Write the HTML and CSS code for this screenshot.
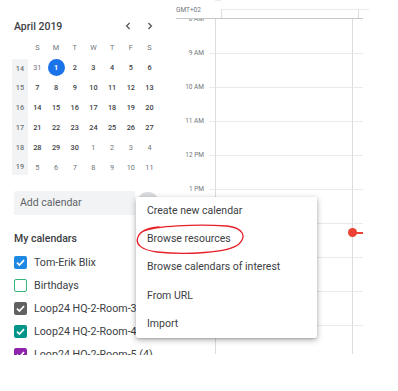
FILE: index.html
```html
<!DOCTYPE html>
<html>
<head>
<meta charset="utf-8">
<title>Calendar</title>
<link rel="stylesheet" href="styles.css">
</head>
<body>
<div class="app">
	<aside class="side">
		<div class="mini-head">
			<span class="month">April 2019</span>
			<span class="nav">
				<svg viewBox="0 0 6 8" width="6" height="8"><path d="M4.6 1 L1.6 4 L4.6 7"/></svg>
				<svg viewBox="0 0 6 8" width="6" height="8"><path d="M1.4 1 L4.4 4 L1.4 7"/></svg>
			</span>
		</div>
		<div class="mini-grid">
			<span></span><span class="dow">S</span><span class="dow">M</span><span class="dow">T</span><span class="dow">W</span><span class="dow">T</span><span class="dow">F</span><span class="dow">S</span>
			<span class="wk first">14</span><span class="day dim">31</span><span class="day"><b class="today">1</b></span><span class="day">2</span><span class="day">3</span><span class="day">4</span><span class="day">5</span><span class="day">6</span>
			<span class="wk">15</span><span class="day">7</span><span class="day">8</span><span class="day">9</span><span class="day">10</span><span class="day">11</span><span class="day">12</span><span class="day">13</span>
			<span class="wk">16</span><span class="day">14</span><span class="day">15</span><span class="day">16</span><span class="day">17</span><span class="day">18</span><span class="day">19</span><span class="day">20</span>
			<span class="wk">17</span><span class="day">21</span><span class="day">22</span><span class="day">23</span><span class="day">24</span><span class="day">25</span><span class="day">26</span><span class="day">27</span>
			<span class="wk">18</span><span class="day">28</span><span class="day">29</span><span class="day">30</span><span class="day dim">1</span><span class="day dim">2</span><span class="day dim">3</span><span class="day dim">4</span>
			<span class="wk last">19</span><span class="day dim">5</span><span class="day dim">6</span><span class="day dim">7</span><span class="day dim">8</span><span class="day dim">9</span><span class="day dim">10</span><span class="day dim">11</span>
		</div>

		<div class="add-row">
			<div class="add-field">Add calendar</div>
			<div class="add-btn"></div>
		</div>

		<h3 class="section">My calendars</h3>
		<ul class="cal-list">
			<li><span class="cb blue"><svg viewBox="0 0 14 14"><path d="M3.2 7.2l2.6 2.5 5-5.2"/></svg></span>Tom-Erik Blix</li>
			<li><span class="cb green"></span>Birthdays</li>
			<li><span class="cb grey"><svg viewBox="0 0 14 14"><path d="M3.2 7.2l2.6 2.5 5-5.2"/></svg></span>Loop24 HQ-2-Room-3 (4)</li>
			<li><span class="cb teal"><svg viewBox="0 0 14 14"><path d="M3.2 7.2l2.6 2.5 5-5.2"/></svg></span>Loop24 HQ-2-Room-4 (4)</li>
			<li><span class="cb purple"><svg viewBox="0 0 14 14"><path d="M3.2 7.2l2.6 2.5 5-5.2"/></svg></span>Loop24 HQ-2-Room-5 (4)</li>
		</ul>
	</aside>

	<main class="week">
		<div class="head-row">
			<div class="tz">GMT+02</div>
			<div class="gut"></div>
			<div class="col"></div>
			<div class="col"></div>
		</div>
		<div class="hours">
			<div class="hour"><div class="lbl">8 AM</div><div class="gut"></div><div class="col"></div><div class="col"></div></div>
			<div class="hour"><div class="lbl">9 AM</div><div class="gut"></div><div class="col"></div><div class="col"></div></div>
			<div class="hour"><div class="lbl">10 AM</div><div class="gut"></div><div class="col"></div><div class="col"></div></div>
			<div class="hour"><div class="lbl">11 AM</div><div class="gut"></div><div class="col"></div><div class="col"></div></div>
			<div class="hour"><div class="lbl">12 PM</div><div class="gut"></div><div class="col"></div><div class="col"></div></div>
			<div class="hour"><div class="lbl">1 PM</div><div class="gut"></div><div class="col"></div><div class="col"></div></div>
			<div class="hour"><div class="lbl"></div><div class="gut"></div><div class="col"></div><div class="col now-col"><span class="now"></span></div></div>
			<div class="hour"><div class="lbl"></div><div class="gut"></div><div class="col"></div><div class="col"></div></div>
			<div class="hour"><div class="lbl"></div><div class="gut"></div><div class="col"></div><div class="col"></div></div>
			<div class="hour"><div class="lbl"></div><div class="gut"></div><div class="col"></div><div class="col"></div></div>
		</div>
	</main>
</div>

<div class="menu">
	<div class="item">Create new calendar</div>
	<div class="item">Browse resources</div>
	<div class="item">Browse calendars of interest</div>
	<div class="item">From URL</div>
	<div class="item">Import</div>
</div>

<svg class="scribble" viewBox="0 0 112 34" width="112" height="34">
	<path d="M9 9 C 20 4, 60 2, 92 4 C 108 6, 112 14, 104 22 C 94 31, 50 33, 22 30 C 6 28, 0 22, 3 15 C 5 9, 14 6, 24 5"/>
</svg>
</body>
</html>
```

FILE: styles.css
```css
* {
	box-sizing: border-box;
}
body {
	margin: 0;
	background: #fff;
	font-family: Roboto, "Liberation Sans", sans-serif;
	color: #3c4043;
}
.app {
	display: flex;
	height: 355px;
	overflow: hidden;
}

/* sidebar */
.side {
	width: 170px;
	flex: none;
	padding-left: 12px;
}
.mini-head {
	display: flex;
	align-items: center;
	justify-content: space-between;
	height: 16px;
	margin-top: 18px;
	padding-left: 2px;
	padding-right: 17px;
}
.month {
	font-size: 10.5px;
	font-weight: 500;
	color: #3c4043;
}
.nav {
	display: flex;
	gap: 16px;
}
.nav svg {
	display: block;
}
.nav path {
	fill: none;
	stroke: #5f6368;
	stroke-width: 1.5;
}
.mini-grid {
	display: grid;
	grid-template-columns: 16px repeat(7, 18.7px);
	grid-auto-rows: 20px;
	margin-top: 3px;
	font-size: 7.3px;
	font-weight: 500;
	text-align: center;
}
.mini-grid span {
	display: flex;
	align-items: center;
	justify-content: center;
}
.dow {
	color: #70757a;
	font-weight: 400;
}
.wk {
	background: #f1f3f4;
	color: #70757a;
}
.wk.first {
	border-radius: 2px 2px 0 0;
	margin-top: 2px;
}
.wk.last {
	border-radius: 0 0 2px 2px;
	margin-bottom: 2px;
}
.day.dim {
	color: #70757a;
	font-weight: 400;
}
.today {
	display: flex;
	align-items: center;
	justify-content: center;
	width: 17px;
	height: 17px;
	border-radius: 50%;
	background: #1a73e8;
	color: #fff;
	font-weight: 700;
}

.add-row {
	display: flex;
	align-items: center;
	margin-top: 14px;
	margin-left: 2px;
}
.add-field {
	width: 121px;
	height: 24px;
	padding-left: 6px;
	line-height: 24px;
	background: #f1f3f4;
	border-radius: 2px 2px 0 0;
	font-size: 10.5px;
	color: #5f6368;
}
.add-btn {
	width: 22px;
	height: 22px;
	margin-left: 2px;
	margin-top: -1px;
	border-radius: 50%;
	background: #dadce0;
}
.section {
	margin: 17px 0 0 2px;
	font-size: 10.5px;
	font-weight: 500;
	color: #3c4043;
}
.cal-list {
	list-style: none;
	margin: 6px 0 0 2px;
	padding: 0;
}
.cal-list li {
	display: flex;
	align-items: center;
	height: 23px;
	font-size: 10.7px;
	white-space: nowrap;
	color: #3c4043;
}
.cb {
	width: 13px;
	height: 13px;
	margin-right: 7px;
	border-radius: 2px;
	flex: none;
}
.cb svg {
	display: block;
	width: 13px;
	height: 13px;
}
.cb path {
	fill: none;
	stroke: #fff;
	stroke-width: 1.8;
}
.blue { background: #1e88e5; }
.green { border: 1.6px solid #33b679; }
.grey { background: #616161; }
.teal { background: #039688; }
.purple { background: #8e24aa; }

/* week grid */
.week {
	width: 193px;
	flex: none;
}
.head-row {
	display: grid;
	grid-template-columns: 39px 6px 137px 11px;
	height: 19px;
	border-bottom: 1px solid #c4c7c5;
	margin-left: 6px;
}
.head-row .tz {
	padding-top: 7px;
	font-size: 6.5px;
	color: #70757a;
	line-height: 1;
}
.head-row .col {
	margin-top: 9px;
	border-left: 1px solid #dadce0;
}
.hours {
	overflow: hidden;
	height: 335px;
}
.hour {
	display: grid;
	grid-template-columns: 39px 6px 137px 11px;
	height: 34px;
}
.hour:first-child .gut,
.hour:first-child .col {
	border-top: none;
}
.lbl {
	margin-top: -4px;
	padding-right: 5px;
	text-align: right;
	font-size: 6.5px;
	line-height: 8px;
	color: #70757a;
}
.gut {
	border-top: 1px solid #e8eaed;
}
.col {
	border-top: 1px solid #e8eaed;
	border-left: 1px solid #dadce0;
}
.now-col {
	position: relative;
}
.now {
	position: absolute;
	left: 0;
	top: 8px;
	width: 12px;
	height: 2px;
	background: #ea4335;
}
.now::before {
	content: "";
	position: absolute;
	left: -5px;
	top: -4px;
	width: 9px;
	height: 9px;
	border-radius: 50%;
	background: #ea4335;
}

/* popup menu */
.menu {
	position: absolute;
	left: 136px;
	top: 197px;
	width: 181px;
	padding: 0;
	background: #fff;
	border-radius: 2px;
	box-shadow: 0 2px 6px rgba(0, 0, 0, 0.3), 0 1px 2px rgba(0, 0, 0, 0.15);
}
.item {
	height: 28.2px;
	line-height: 27px;
	padding-left: 11px;
	font-size: 10.5px;
	color: #3c4043;
	white-space: nowrap;
}

.scribble {
	position: absolute;
	left: 135px;
	top: 222px;
}
.scribble path {
	fill: none;
	stroke: #e8202a;
	stroke-width: 1.3;
	stroke-linecap: round;
}
```
